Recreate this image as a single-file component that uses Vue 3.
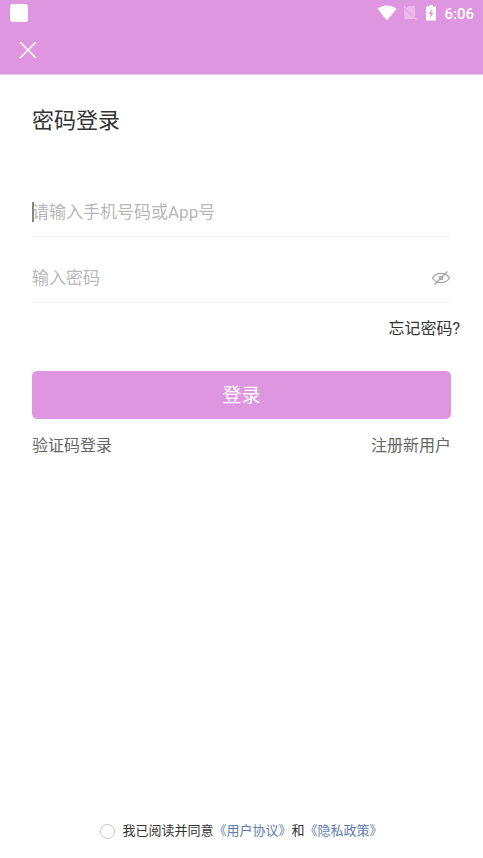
<script setup>
import { ref } from 'vue'

const account = ref('')
const password = ref('')
const showPassword = ref(false)
const agreed = ref(false)
</script>

<template>
  <div class="page">
    <header class="top">
      <div class="status">
        <span class="app-badge"></span>
        <div class="indicators">
          <svg class="wifi" viewBox="0 0 20 16" aria-hidden="true">
            <path d="M10 15.5 L0.6 3.9 C3 1.8 6.3 0.5 10 0.5 S17 1.8 19.4 3.9 Z" fill="#fff" />
          </svg>
          <svg class="sim" viewBox="0 0 14 16" aria-hidden="true">
            <g fill="#fff" opacity="0.35">
              <path d="M5.5 1 H12 V11.5 L3.5 3 Z" />
              <path d="M1 3.500 L11.500 14 H1.500 Z" />
              <path d="M0.500 2 L1.500 1 L14 14 L13 15 Z" />
            </g>
          </svg>
          <svg class="battery" viewBox="0 0 12 16" aria-hidden="true">
            <path d="M4 0 H8 V1.5 H10.5 Q11 1.5 11 2 V15 Q11 15.5 10.5 15.5 H1.5 Q1 15.5 1 15 V2 Q1 1.5 1.5 1.5 H4 Z" fill="#fff" />
            <path d="M7 4 L3.5 9 H5.5 L5 13 L8.5 8 H6.5 Z" fill="#df96e0" />
          </svg>
          <span class="clock">6:06</span>
        </div>
      </div>
      <button class="close" type="button" aria-label="关闭">
        <svg viewBox="0 0 18 18" aria-hidden="true">
          <path d="M1.5 1.5 L16.5 16.5 M16.5 1.5 L1.5 16.5" fill="none" stroke="#fff" stroke-width="1.5" stroke-linecap="round" />
        </svg>
      </button>
    </header>

    <main class="content">
      <h1 class="title">密码登录</h1>
      <form @submit.prevent>
        <div class="field">
          <span v-if="!account" class="caret"></span>
          <input v-model="account" type="text" aria-label="手机号码或App号" placeholder="请输入手机号码或App号" />
        </div>
        <div class="field">
          <input v-model="password" :type="showPassword ? 'text' : 'password'" aria-label="密码" placeholder="输入密码" />
          <button class="eye" type="button" aria-label="显示密码" @click="showPassword = !showPassword">
            <svg viewBox="0 0 20 16" fill="none" stroke="#a6a6a6" stroke-width="1.3" aria-hidden="true">
              <path d="M1.5 8 C5.5 1.8 14.5 1.8 18.5 8 C14.5 14.2 5.5 14.2 1.5 8 Z" />
              <circle cx="10" cy="8" r="1.6" />
              <path d="M3.5 14.5 L16.5 1.5" />
            </svg>
          </button>
        </div>
        <div class="forgot"><a href="#">忘记密码?</a></div>
        <button class="submit" type="submit">登录</button>
      </form>
      <nav class="links">
        <a href="#">验证码登录</a>
        <a href="#">注册新用户</a>
      </nav>
    </main>

    <footer class="agreement">
      <input id="agree" v-model="agreed" type="checkbox" />
      <p><label for="agree">我已阅读并同意</label><a href="#">《用户协议》</a>和<a href="#">《隐私政策》</a></p>
    </footer>
  </div>
</template>

<style>
body {
  margin: 0;
  background: #fff;
}
</style>

<style scoped>
.page {
  display: flex;
  flex-direction: column;
  min-height: 100vh;
  font-family: Roboto, "Noto Sans CJK SC", sans-serif;
  color: #333;
}

button {
  padding: 0;
  border: 0;
  background: none;
  font-family: inherit;
  cursor: pointer;
}

svg {
  display: block;
}

a {
  color: inherit;
  text-decoration: none;
}

.top {
  padding-bottom: 7px;
  background: #df96e0;
  border-bottom: 1px solid #efcaf0;
}

.status {
  display: flex;
  align-items: center;
  justify-content: space-between;
  height: 26px;
  padding: 0 9px 0 10px;
}

.app-badge {
  width: 18px;
  height: 18px;
  border-radius: 3px;
  background: #fff;
}

.indicators {
  display: flex;
  align-items: center;
}

.wifi {
  width: 20px;
  height: 16px;
  margin-right: 6px;
}

.sim {
  width: 14px;
  height: 16px;
  margin-right: 8px;
}

.battery {
  width: 12px;
  height: 16px;
  margin-right: 7px;
}

.clock {
  padding-top: 2px;
  color: #fff;
  font-size: 15px;
  font-weight: 500;
  line-height: 20px;
}

.close {
  display: grid;
  place-items: center;
  width: 34px;
  height: 34px;
  margin: 7px 0 0 11px;
}

.close svg {
  width: 18px;
  height: 18px;
}

.content {
  padding: 30px 32px 0;
}

.title {
  margin: 0 0 62px;
  font-size: 22px;
  font-weight: 400;
  line-height: 32px;
}

.field {
  position: relative;
  display: flex;
  align-items: center;
  margin-bottom: 28px;
  padding-bottom: 11px;
  border-bottom: 1px solid #f3f3f3;
}

.field input {
  flex: 1;
  min-width: 0;
  height: 26px;
  padding: 0;
  border: 0;
  outline: none;
  background: none;
  color: #333;
  font-family: inherit;
  font-size: 17px;
}

.field input::placeholder {
  color: #b8b8b8;
  opacity: 1;
}

.caret {
  position: absolute;
  top: 3px;
  left: 0;
  width: 2px;
  height: 20px;
  background: #888;
}

.eye svg {
  width: 20px;
  height: 16px;
}

.forgot {
  margin: -14px -9px 30px;
  font-size: 16px;
  line-height: 24px;
  text-align: right;
}

.submit {
  display: block;
  width: 100%;
  height: 48px;
  padding-bottom: 4px;
  border-radius: 5px;
  background: #df96e0;
  color: #fff;
  font-size: 19px;
}

.links {
  display: flex;
  justify-content: space-between;
  padding-top: 15px;
  font-size: 16px;
  line-height: 24px;
  color: #666;
}

.agreement {
  display: flex;
  align-items: center;
  justify-content: center;
  gap: 7px;
  margin-top: auto;
  padding: 16px 16px 17px;
  font-size: 13px;
  line-height: 20px;
}

.agreement input {
  appearance: none;
  box-sizing: border-box;
  width: 15px;
  height: 15px;
  margin: 0;
  border: 1px solid #c8c8c8;
  border-radius: 50%;
}

.agreement input:checked {
  background: #df96e0;
}

.agreement p {
  margin: 0;
}

.agreement a {
  color: #5f7cac;
}
</style>
